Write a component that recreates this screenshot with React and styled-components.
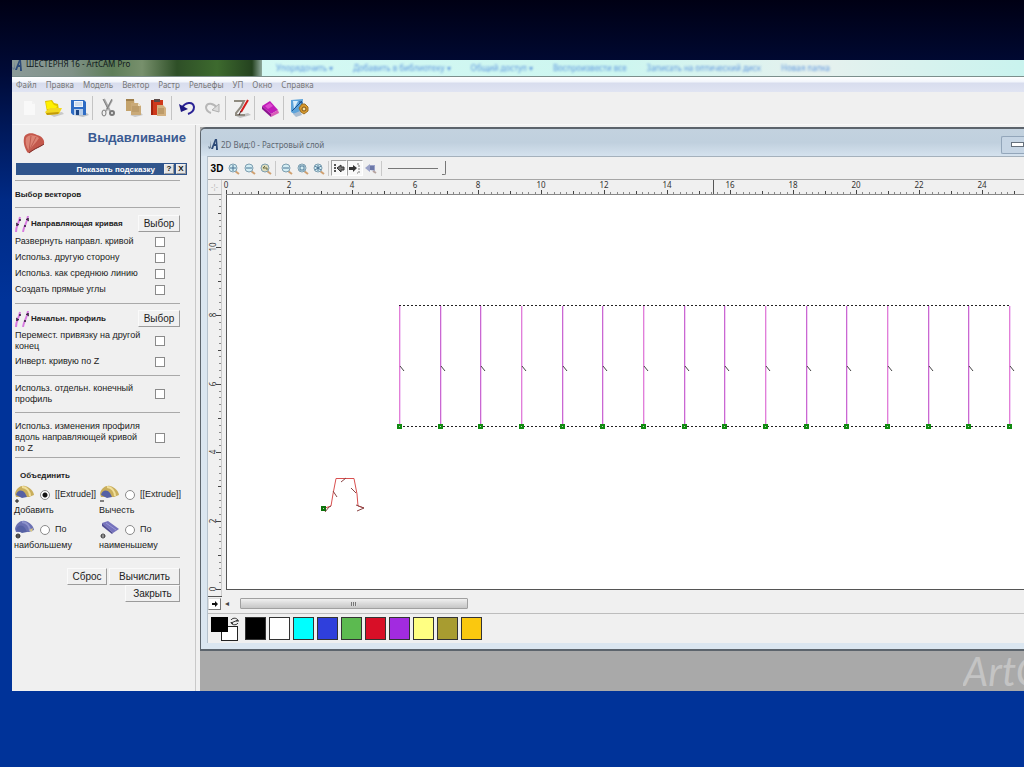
import React, { useEffect, useRef, useState } from "react";
import styled, { createGlobalStyle } from "styled-components";

const MENU = ["Файл", "Правка", "Модель", "Вектор", "Растр", "Рельефы", "УП", "Окно", "Справка"];

const BACK_LINKS = [
    "Упорядочить ▾",
    "Добавить в библиотеку ▾",
    "Общий доступ ▾",
    "Воспроизвести все",
    "Записать на оптический диск",
    "Новая папка",
];

const COLORS = [
    ["Черный", "#000000"],
    ["Белый", "#ffffff"],
    ["Голубой", "#00ffff"],
    ["Синий", "#2f3fdc"],
    ["Зеленый", "#5cba50"],
    ["Красный", "#d80f27"],
    ["Фиолетовый", "#a22be0"],
    ["Желтый", "#ffff82"],
    ["Оливковый", "#a89c30"],
    ["Оранжевый", "#fac80f"],
];

// ruler scale, pixels per unit
const STEP_X = 31.5;
const STEP_Y = 34.2;

/* ---------- icons ---------- */

const LogoIcon = () => (
    <svg width="10" height="11" viewBox="0 0 10 11">
        <path d="M0 7 L2 8 L3 1 L3 9 L1 10 Z" fill="#6d7f92" />
        <path d="M3 10 L7 0 L9 0 L10 11 L8 11 L8 7 L6 7 L5 10 Z M7 5 L8 5 L8 2 Z" fill="#2c4a78" />
    </svg>
);

const NewIcon = () => (
    <svg width="20" height="20" viewBox="0 0 20 20">
        <path d="M5 3 H13 L16 6 V17 H5 Z" fill="#f9f9f9" />
        <path d="M13 3 V6 H16" fill="#f2f2f2" />
    </svg>
);

const OpenIcon = () => (
    <svg width="20" height="20" viewBox="0 0 20 20">
        <path d="M5 16 L18 14 L20 16 L10 19 Z" fill="#c9c9c9" />
        <path d="M1 3 L8 2 L10 5 L14 6 L15 12 L3 14 Z" fill="#e0c400" />
        <path d="M2 4 L7 3 L10 7 L13 8 L12 11 L3 11 Z" fill="#fff100" />
        <path d="M1 14 L6 10 L18 10 L15 16 L3 17 Z" fill="#f2d820" />
        <path d="M2 15 L15 14 L14 16 L3 17 Z" fill="#c29a08" />
    </svg>
);

const SaveIcon = () => (
    <svg width="20" height="20" viewBox="0 0 20 20">
        <path d="M5 17 L18 15 L20 17 L14 19 Z" fill="#b9bfc6" />
        <path d="M2 2 H15 L17 4 V17 H4 L2 15 Z" fill="#2e6cc4" />
        <path d="M5 3 H14 V9 H5 Z" fill="#eef4fb" />
        <path d="M6 5 H13 M6 7 H13" stroke="#b3c7de" />
        <path d="M5 11 H14 V17 H5 Z" fill="#b6cdea" />
        <path d="M7 12 H10 V17 H7 Z" fill="#1b4585" />
    </svg>
);

const CutIcon = () => (
    <svg width="20" height="20" viewBox="0 0 20 20" fill="none">
        <path d="M6 1 L12 13 M14 2 L8 13" stroke="#a8a8a8" strokeWidth="2" />
        <path d="M5 1 L10 11 M14 1 L9 11" stroke="#7c7c7c" />
        <ellipse cx="6" cy="15" rx="2" ry="3" stroke="#7a7a7a" />
        <ellipse cx="14" cy="15" rx="2" ry="2" stroke="#7a7a7a" strokeWidth="2" />
    </svg>
);

const CopyIcon = () => (
    <svg width="20" height="20" viewBox="0 0 20 20">
        <path d="M7 17 L18 15 L20 17 L12 19 Z" fill="#c9c9c9" />
        <path d="M3 1 H11 L12 13 H3 Z" fill="#c4a36c" />
        <path d="M3 1 H11 V3 H3 Z" fill="#9f7f4c" />
        <path d="M8 5 H15 L18 8 V17 H8 Z" fill="#caaa78" />
        <path d="M15 5 V8 H18 Z" fill="#f1e3c6" />
        <path d="M9 9 H16 M9 11 H16 M9 13 H16" stroke="#b08f5c" />
    </svg>
);

const PasteIcon = () => (
    <svg width="20" height="20" viewBox="0 0 20 20">
        <path d="M3 2 H15 V17 H3 Z" fill="#cf3a1c" />
        <path d="M3 2 H5 V17 H3 Z" fill="#a02410" />
        <path d="M6 1 H12 V4 H6 Z" fill="#5b4a48" />
        <path d="M9 7 H15 L18 10 V18 H9 Z" fill="#d3b180" />
        <path d="M10 11 H16 M10 13 H16 M10 15 H16" stroke="#a78552" />
    </svg>
);

const UndoIcon = () => (
    <svg width="20" height="20" viewBox="0 0 20 20" fill="none">
        <path d="M5 10 C8 4 16 3 17 9 C17 13 14 15 11 16" stroke="#2b2396" strokeWidth="2" />
        <path d="M2 6 L4 14 L11 11 Z" fill="#1d1780" />
    </svg>
);

const RedoIcon = () => (
    <svg width="20" height="20" viewBox="0 0 20 20" fill="none">
        <path d="M15 10 C12 5 5 4 4 9 C4 12 6 14 9 15" stroke="#b7b7b7" strokeWidth="2" />
        <path d="M17 6 L17 14 L10 12 Z" fill="#dcdcdc" stroke="#b0b0b0" />
    </svg>
);

const EditIcon = () => (
    <svg width="20" height="20" viewBox="0 0 20 20" fill="none">
        <path d="M5 18 L17 15 L20 17 L9 20 Z" fill="#c0c0c0" />
        <path d="M3 3 H13 L10 9 L5 15 L5 17 H14" stroke="#8f8b80" strokeWidth="2" />
        <path d="M17 2 L10 14" stroke="#d51c1c" strokeWidth="2" />
        <path d="M10 13 L8 17" stroke="#402020" />
    </svg>
);

const EraserIcon = () => (
    <svg width="20" height="20" viewBox="0 0 20 20">
        <path d="M2 8 L10 3 L18 12 L11 16 Z" fill="#c11bb9" />
        <path d="M2 8 L11 16 L11 19 L2 11 Z" fill="#8d1390" />
        <path d="M11 16 L18 12 L19 15 L11 19 Z" fill="#d85cb8" />
        <path d="M5 8 L10 5 L13 8 L8 11 Z" fill="#dc4ccf" />
    </svg>
);

const HelpIcon = () => (
    <svg width="20" height="20" viewBox="0 0 20 20" fill="none">
        <path d="M2 2 L14 1 L13 14 L5 16 L2 14 Z" fill="#5da3da" />
        <path d="M4 3 L9 3 L5 11 Z" fill="#d6ecfa" />
        <path d="M3 13 L13 3 M10 4 H13 V8" stroke="#18508f" />
        <path d="M4 16 L11 13 L13 17 L7 19 Z" fill="#a9bcd0" />
        <path d="M10 10 L13 6 L16 6 L19 9 L19 13 L15 16 L12 14 Z" fill="#d99a2c" stroke="#9b6f24" />
        <circle cx="15" cy="11" r="2" fill="#f7e2a0" stroke="#7b4f14" />
    </svg>
);

const ShellIcon = () => (
    <svg width="24" height="24" viewBox="0 0 24 24" fill="none">
        <path d="M2 7 C3 2 10 1 15 4 C20 5 23 9 22 13 C19 16 14 17 9 21 L6 22 C3 18 1 12 2 7 Z" fill="#c4584c" />
        <path d="M4 7 C7 3 13 4 17 7 C14 12 10 15 7 20 C4 16 3 11 4 7 Z" fill="#dc8475" />
        <path d="M7 20 L9 5 M7 20 L14 6 M7 20 L19 9" stroke="#bf5c50" />
        <path d="M22 13 C18 16 13 17 7 22" stroke="#7c2e2a" />
    </svg>
);

const CurveIcon = () => (
    <svg width="15" height="16" viewBox="0 0 15 16" fill="none">
        <path d="M1 16 C1 9 4 8 5 1 M8 16 C9 9 12 8 13 0" stroke="#d77be0" strokeWidth="2" />
        <circle cx="2" cy="9" r="1" fill="#2c1a35" />
        <circle cx="5" cy="4" r="1" fill="#2c1a35" />
        <circle cx="10" cy="10" r="1" fill="#2c1a35" />
        <circle cx="13" cy="3" r="1" fill="#2c1a35" />
        <path d="M1 7 L4 9 M11 3 L14 5" stroke="#2c1a35" />
    </svg>
);

const CombineIcon = ({ kind }) => (
    <svg width="21" height="19" viewBox="0 0 21 19" fill="none">
        {kind === "min" ? (
            <>
                <path d="M3 3 L9 1 L20 9 L14 13 Z" fill="#7673bd" />
                <path d="M3 3 L14 13 L13 14 L3 6 Z" fill="#4f4c95" />
                <path d="M7 3 L17 10" stroke="#9a98d6" />
            </>
        ) : (
            <>
                <path d="M1 9 C2 3 7 0 11 1 C16 2 20 7 20 10 L15 12 L2 12 Z" fill={kind === "max" ? "#6a70b2" : "#c9ae5c"} />
                <path d="M8 2 C13 2 16 7 16 11" stroke={kind === "max" ? "#8d92cb" : "#f1df9b"} strokeWidth="2" />
                <path d="M2 10 C3 5 8 4 11 8 L13 12 L8 13 Z" fill="#5661a4" />
                {kind === "max" && <path d="M15 10 L19 8 L18 12 Z" fill="#d8c887" />}
            </>
        )}
        {(kind === "add" || kind === "sub") && <path d="M1 16 H5" stroke="#111" />}
        {kind === "add" && <path d="M3 14 V18" stroke="#111" />}
        {(kind === "max" || kind === "min") && (
            <>
                <circle cx="4" cy="16" r="2" fill={kind === "max" ? "#777" : "none"} stroke="#333" />
                <path d="M2 16 H6" stroke="#333" />
            </>
        )}
    </svg>
);

const ZoomIcon = ({ kind }) => (
    <svg width="13" height="13" viewBox="0 0 13 13" fill="none">
        <path d="M8 9 L12 12" stroke="#d0a070" strokeWidth="2" />
        <circle cx="6" cy="6" r="4" fill={kind === "prev" ? "#dcdaba" : "#d3edf3"} stroke="#7d9eb0" strokeWidth="1" />
        {(kind === "in" || kind === "out" || kind === "wide") && <path d="M3 6 H9" stroke="#4a7494" />}
        {kind === "in" && <path d="M6 3 V9" stroke="#4a7494" />}
        {kind === "prev" && <path d="M4 6 L6 4 M4 6 H8 V8" stroke="#6b6b40" />}
        {kind === "box" && <rect x="4" y="4" width="4" height="4" stroke="#4a7494" />}
        {kind === "all" && <path d="M3 4 L9 8 M9 4 L3 8 M6 3 V9" stroke="#4a7494" />}
    </svg>
);

const SnapIcon = ({ flip }) => (
    <svg width="12" height="12" viewBox="0 0 12 12" fill="none">
        {flip ? (
            <>
                <path d="M0 5 H4 V3 L8 6 L4 10 V8 H0 Z" fill="#333" />
                <path d="M8 2 H10 V11 H8" stroke="#777" strokeDasharray="2 1" />
            </>
        ) : (
            <>
                <path d="M11 5 H8 V3 L4 6 L8 10 V8 H11 Z" fill="#777" stroke="#333" />
                <path d="M2 2 V11" stroke="#555" strokeWidth="2" strokeDasharray="2 1" />
            </>
        )}
    </svg>
);

const GhostIcon = () => (
    <svg width="12" height="12" viewBox="0 0 12 12">
        <path d="M0 6 L5 2 V3 L10 3 V9 L5 8 V10 Z" fill="#9aa2c8" />
        <path d="M8 9 L11 11" stroke="#b5a3a0" strokeWidth="2" />
        <path d="M5 4 H9 V8 H5 Z" fill="#6c78a8" />
    </svg>
);

const PageArrow = () => (
    <svg width="8" height="8" viewBox="0 0 8 8">
        <path d="M1 3 H4 V1 L7 4 L4 7 V5 H1 Z" fill="#111" />
    </svg>
);

const SwapIcon = () => (
    <svg width="9" height="9" viewBox="0 0 9 9" fill="none">
        <path d="M1 3 C3 0 8 1 8 4 M8 6 C6 9 1 8 1 5 M1 6 L8 3" stroke="#333" />
        <path d="M6 4 H9 M1 5 L3 7" stroke="#333" />
    </svg>
);

/* ---------- rulers and drawing ---------- */

const TopRuler = () => {
    const box = useRef(null);
    const [width, setWidth] = useState(0);

    useEffect(() => {
        const measure = () => setWidth(box.current.clientWidth);
        measure();
        window.addEventListener("resize", measure);
        return () => window.removeEventListener("resize", measure);
    }, []);

    // only as many ticks as the ruler has room for
    const count = Math.floor((width * 5) / STEP_X);
    const ticks = Array.from({ length: count }, (_, i) => i);

    return (
        <RulerX ref={box}>
            <RulerSvg>
                {ticks.map((i) => {
                    const len = i % 10 === 0 ? 4 : i % 5 === 0 ? 3 : 2;
                    return (
                        <rect
                            key={i}
                            x={Math.round((i * STEP_X) / 5)}
                            y={14 - len}
                            width="1"
                            height={len}
                            fill={i % 5 ? "#888" : "#444"}
                        />
                    );
                })}
                {ticks.filter((i) => i % 10 === 0).map((i) => (
                    <text key={i} x={Math.round((i * STEP_X) / 5)} y="8" textAnchor="middle">
                        {i / 5}
                    </text>
                ))}
                <rect x="487" y="0" width="1" height="14" fill="#555" />
            </RulerSvg>
        </RulerX>
    );
};

const SideRuler = () => {
    const zero = 394;
    const ticks = Array.from({ length: 58 }, (_, i) => i);
    return (
        <RulerY>
            <RulerSvg>
                {ticks.map((i) => {
                    const y = Math.round(zero - (i * STEP_Y) / 5);
                    const len = i % 10 === 0 ? 5 : i % 5 === 0 ? 3 : 2;
                    return <rect key={i} x={13 - len} y={y} width={len} height="1" fill={i % 5 ? "#888" : "#444"} />;
                })}
                {ticks.filter((i) => i % 10 === 0).map((i) => {
                    const y = Math.round(zero - (i * STEP_Y) / 5);
                    return (
                        <text key={i} x="8" y={y} transform={`rotate(-90 8 ${y})`} textAnchor="middle">
                            {i / 5}
                        </text>
                    );
                })}
                <rect x="13" y="0" width="1" height="401" fill="#ccc" />
                <rect x="0" y="401" width="14" height="1" fill="#555" />
            </RulerSvg>
        </RulerY>
    );
};

const Drawing = () => {
    const columns = Array.from({ length: 16 }, (_, i) => Math.round(172 + i * 40.67));
    return (
        <CanvasSvg>
            <path d="M172 110.5 H783 M172 231.5 H783" stroke="#222" strokeDasharray="2 2" />
            {columns.map((x, i) => (
                <g key={x}>
                    <rect x={x} y="111" width="1" height="120" fill={i % 3 ? "#c968d2" : "#e27fd8"} />
                    <rect x={x + 1} y="111" width="1" height="120" fill="#f3d0f5" />
                    <path d={`M${x + 1} 171 L${x + 5} 176`} stroke="#444" fill="none" />
                    <rect x={x - 2} y="229" width="5" height="5" fill="#108a10" />
                    <rect x={x} y="231" width="1" height="1" fill="#b6e0b6" />
                </g>
            ))}
            <path d="M98 313 L104 311 L106 299 L109 283.5 H127 L130 299 L131 311 L137 313" stroke="#d95050" fill="none" />
            <path
                d="M106 296 L110 302 M114 287 L119 283 M124 293 L129 298 M98 317 L102 312 L104 311 M129 310 L137 313 L130 316"
                stroke="#8a4545"
                fill="none"
            />
            <rect x="94" y="311" width="5" height="5" fill="#0d720d" />
            <rect x="96" y="313" width="1" height="1" fill="#b6e0b6" />
        </CanvasSvg>
    );
};

/* ---------- panel parts ---------- */

const CheckRow = ({ id, children }) => (
    <Row>
        <RowLabel htmlFor={id}>{children}</RowLabel>
        <Check id={id} type="checkbox" />
    </Row>
);

const VectorRow = ({ title }) => (
    <PickRow>
        <CurveIcon />
        <PickTitle>{title}</PickTitle>
        <PanelButton $width="42px">Выбор</PanelButton>
    </PickRow>
);

const CombineOption = ({ kind, text, below, value, onChange }) => (
    <Option>
        <OptionTop>
            <CombineIcon kind={kind} />
            <Radio type="radio" name="combine" checked={value === kind} onChange={() => onChange(kind)} />
            <span>{text}</span>
        </OptionTop>
        <OptionBelow>{below}</OptionBelow>
    </Option>
);

const ExtrudePanel = () => {
    const [combine, setCombine] = useState("add");

    return (
        <Panel>
            <PanelHead>
                <ShellIcon />
                <PanelTitle>Выдавливание</PanelTitle>
            </PanelHead>
            <HintBar>
                <span>Показать подсказку</span>
                <HintButton aria-label="Справка">?</HintButton>
                <HintButton aria-label="Закрыть панель">X</HintButton>
            </HintBar>
            <Section $top="3px" $bottom="1px">
                <SectionTitle>Выбор векторов</SectionTitle>
            </Section>
            <Section $top="6px" $bottom="5px">
                <VectorRow title="Направляющая кривая" />
                <CheckRow id="reverse">Развернуть направл. кривой</CheckRow>
                <CheckRow id="side">Использ. другую сторону</CheckRow>
                <CheckRow id="middle">Использ. как среднюю линию</CheckRow>
                <CheckRow id="corners">Создать прямые углы</CheckRow>
            </Section>
            <Section $top="5px" $bottom="5px">
                <VectorRow title="Начальн. профиль" />
                <CheckRow id="anchor">{"Перемест. привязку на другой\nконец"}</CheckRow>
                <CheckRow id="invert">Инверт. кривую по Z</CheckRow>
            </Section>
            <Section $top="6px" $bottom="5px">
                <CheckRow id="endprofile">{"Использ. отдельн. конечный\nпрофиль"}</CheckRow>
            </Section>
            <Section $top="7px" $bottom="1px">
                <CheckRow id="scale">{"Использ. изменения профиля\nвдоль направляющей кривой\nпо Z"}</CheckRow>
            </Section>
            <Section $top="12px" $bottom="2px">
                <CombineTitle>Объединить</CombineTitle>
                <Options>
                    <CombineOption kind="add" text="[[Extrude]]" below="Добавить" value={combine} onChange={setCombine} />
                    <CombineOption kind="sub" text="[[Extrude]]" below="Вычесть" value={combine} onChange={setCombine} />
                    <CombineOption kind="max" text="По" below="наибольшему" value={combine} onChange={setCombine} />
                    <CombineOption kind="min" text="По" below="наименьшему" value={combine} onChange={setCombine} />
                </Options>
            </Section>
            <Actions>
                <PanelButton $width="40px">Сброс</PanelButton>
                <PanelButton $width="71px">Вычислить</PanelButton>
                <PanelButton $width="55px">Закрыть</PanelButton>
            </Actions>
        </Panel>
    );
};

const ViewWindow = () => (
    <ViewFrame>
        <ViewTitle>
            <LogoIcon />
            <span>2D Вид:0 - Растровый слой</span>
            <MinButton aria-label="Свернуть">
                <MinGlyph />
            </MinButton>
        </ViewTitle>
        <ViewBody>
            <ViewTools>
                <ToolCell $bold>3D</ToolCell>
                <ToolCell aria-label="Увеличить"><ZoomIcon kind="in" /></ToolCell>
                <ToolCell aria-label="Уменьшить"><ZoomIcon kind="out" /></ToolCell>
                <ToolCell aria-label="Предыдущий масштаб"><ZoomIcon kind="prev" /></ToolCell>
                <ToolSep />
                <ToolCell aria-label="По ширине"><ZoomIcon kind="wide" /></ToolCell>
                <ToolCell aria-label="По выделению"><ZoomIcon kind="box" /></ToolCell>
                <ToolCell aria-label="Показать все"><ZoomIcon kind="all" /></ToolCell>
                <ToolSep />
                <ToolCell $pressed aria-label="Привязка слева"><SnapIcon /></ToolCell>
                <ToolCell $pressed aria-label="Привязка справа"><SnapIcon flip /></ToolCell>
                <ToolCell aria-label="Просмотр"><GhostIcon /></ToolCell>
                <ToolSep />
                <Opacity type="range" defaultValue="100" aria-label="Контраст" />
            </ViewTools>
            <Sheet>
                <Corner>-¦-</Corner>
                <TopRuler />
                <SideRuler />
                <CanvasBox><Drawing /></CanvasBox>
            </Sheet>
            <ScrollRow>
                <SmallButton aria-label="Страницы"><PageArrow /></SmallButton>
                <ScrollArrow aria-label="Влево">◂</ScrollArrow>
                <ScrollThumb>
                    <Grip />
                </ScrollThumb>
            </ScrollRow>
            <Palette>
                <Current>
                    <BackColor />
                    <FrontColor />
                    <SwapButton aria-label="Поменять цвета"><SwapIcon /></SwapButton>
                </Current>
                {COLORS.map(([name, color]) => (
                    <Swatch key={name} aria-label={name} $color={color} />
                ))}
            </Palette>
        </ViewBody>
    </ViewFrame>
);

const App = () => (
    <Backdrop>
        <GlobalStyle />
        <MainWindow>
            <TitleBar>
                <TitleText>
                    <LogoIcon />
                    ШЕСТЕРНЯ 16 - ArtCAM Pro
                </TitleText>
                <GlassLinks>
                    {BACK_LINKS.map((link) => (
                        <span key={link}>{link}</span>
                    ))}
                </GlassLinks>
            </TitleBar>
            <MenuBar>
                {MENU.map((item) => (
                    <MenuItem key={item}>{item}</MenuItem>
                ))}
            </MenuBar>
            <Toolbar>
                <IconButton aria-label="Создать"><NewIcon /></IconButton>
                <IconButton aria-label="Открыть"><OpenIcon /></IconButton>
                <IconButton aria-label="Сохранить"><SaveIcon /></IconButton>
                <Separator />
                <IconButton aria-label="Вырезать"><CutIcon /></IconButton>
                <IconButton aria-label="Копировать"><CopyIcon /></IconButton>
                <IconButton aria-label="Вставить"><PasteIcon /></IconButton>
                <Separator />
                <IconButton aria-label="Отменить"><UndoIcon /></IconButton>
                <IconButton aria-label="Повторить"><RedoIcon /></IconButton>
                <Separator />
                <IconButton aria-label="Заметки"><EditIcon /></IconButton>
                <Separator />
                <IconButton aria-label="Руководство"><EraserIcon /></IconButton>
                <Separator />
                <IconButton aria-label="Параметры"><HelpIcon /></IconButton>
            </Toolbar>
            <Content>
                <ExtrudePanel />
                <Workspace>
                    <ViewWindow />
                    <Watermark>
                        <WatermarkText>ArtC</WatermarkText>
                    </Watermark>
                </Workspace>
            </Content>
        </MainWindow>
    </Backdrop>
);

export default App;

const GlobalStyle = createGlobalStyle`
    * {
        box-sizing: border-box;
    }

    body {
        margin: 0;
        overflow: hidden;
        font-family: "Liberation Sans", Arial, sans-serif;
        color: #222;
    }

    button {
        padding: 0;
        font-family: inherit;
        color: inherit;
    }

    svg {
        display: block;
        flex: none;
    }
`;

const Backdrop = styled.div`
    min-height: 100vh;
    display: flex;
    flex-direction: column;
    padding: 60px 0 76px 12px;
    background: linear-gradient(180deg, #000014 0, #000a36 70px, #002a85 200px, #003399 300px);
`;

const MainWindow = styled.div`
    flex: 1;
    display: flex;
    flex-direction: column;
    background: #f0f0f0;
`;

const TitleBar = styled.header`
    display: flex;
    height: 17px;
    overflow: hidden;
    border-bottom: 1px solid #7c8f8c;
    background: linear-gradient(90deg, #d9fbf6, #cdf6f0 60%, #e6f1ee 80%, #c9f3ee);
`;

const TitleText = styled.div`
    flex: none;
    width: 250px;
    display: flex;
    gap: 4px;
    font-family: "Noto Sans", sans-serif;
    font-size: 8px;
    line-height: 8px;
    color: #10181c;
    background: linear-gradient(90deg, #8b9a98 0, #7f9186 60px, #5e7d58 100px, #77906c 130px, #2e4f27 165px, #3d6a2e 205px, #24421f 240px, #8fa99c 250px);
`;

const GlassLinks = styled.div`
    display: flex;
    gap: 20px;
    padding-left: 14px;
    font-family: "Noto Sans", sans-serif;
    font-size: 8px;
    line-height: 16px;
    white-space: nowrap;
    color: #5f97de;
    filter: blur(1px);
`;

const MenuBar = styled.nav`
    display: flex;
    gap: 9px;
    height: 15px;
    padding: 1px 4px 0;
    background: linear-gradient(180deg, #ffffff 0, #f2f5fb 5px, #d8ddee 6px, #e0e4f2 100%);
`;

const MenuItem = styled.button`
    border: 0;
    background: none;
    font-family: "Noto Sans", sans-serif;
    font-size: 8px;
    line-height: 12px;
    color: #777;
`;

const Toolbar = styled.div`
    display: flex;
    align-items: center;
    height: 33px;
    padding: 0 0 1px 4px;
    border-bottom: 1px solid #f8f8f8;
`;

const IconButton = styled.button`
    width: 25px;
    height: 24px;
    display: flex;
    align-items: center;
    justify-content: center;
    border: 0;
    background: none;
`;

const Separator = styled.span`
    width: 1px;
    height: 24px;
    margin: 0 2px 0 1px;
    background: #c4c4c4;
`;

const Content = styled.div`
    flex: 1;
    display: flex;
`;

const Panel = styled.aside`
    flex: none;
    width: 184px;
    padding: 0 15px 0 3px;
    border-right: 1px solid #c9c9c9;
`;

const PanelHead = styled.div`
    display: flex;
    justify-content: space-between;
    height: 38px;
    padding: 6px 0 0 7px;
    margin-right: -6px;
`;

const PanelTitle = styled.h1`
    margin: 0;
    font-size: 13px;
    line-height: 14px;
    color: #3a5a92;
`;

const HintBar = styled.div`
    display: flex;
    align-items: center;
    justify-content: flex-end;
    gap: 2px;
    height: 12px;
    margin: 0 -7px 5px 1px;
    padding-right: 1px;
    background: #30558c;
    color: #fff;
    font-size: 8px;
    font-weight: bold;

    span {
        margin-right: 7px;
    }
`;

const HintButton = styled.button`
    width: 10px;
    height: 10px;
    border: 1px outset #eee;
    background: #e4e4e4;
    color: #111;
    font-size: 8px;
    font-weight: bold;
    line-height: 8px;
`;

const Section = styled.section`
    padding: ${(props) => props.$top} 0 ${(props) => props.$bottom};
    border-top: 1px solid #a9a9a9;
`;

const SectionTitle = styled.h2`
    margin: 0;
    font-size: 8px;
    line-height: 22px;
`;

const PickRow = styled.div`
    display: flex;
    align-items: center;
    gap: 1px;
    height: 20px;
    padding-bottom: 1px;
`;

const PickTitle = styled.h2`
    flex: 1;
    margin: 0;
    white-space: nowrap;
    font-size: 8px;
    line-height: 11px;
`;

const Row = styled.div`
    display: flex;
    align-items: center;
    justify-content: space-between;
    min-height: 16px;
    padding: 1px 15px 2px 0;
`;

const RowLabel = styled.label`
    white-space: pre;
    font-size: 9px;
    line-height: 11px;
`;

const Check = styled.input`
    appearance: none;
    flex: none;
    width: 10px;
    height: 10px;
    margin: 0;
    border: 1px solid #8a8a8a;
    background: #fff;

    &:checked {
        background: #555;
    }
`;

const PanelButton = styled.button`
    width: ${(props) => props.$width};
    height: 17px;
    border: 1px solid;
    border-color: #fafafa #9b9b9b #9b9b9b #fafafa;
    background: #f0f0f0;
    font-size: 10px;
    line-height: 14px;
`;

const CombineTitle = styled.h2`
    margin: 0 0 3px 5px;
    font-size: 8px;
    line-height: 12px;
`;

const Options = styled.div`
    display: grid;
    grid-template-columns: 85px 85px;
    margin-left: -1px;
`;

const Option = styled.label`
    height: 35px;
    font-size: 9px;
    line-height: 11px;
`;

const OptionTop = styled.span`
    display: flex;
    align-items: center;
    gap: 5px;
    height: 19px;
`;

const OptionBelow = styled.span`
    display: block;
    line-height: 13px;
`;

const Radio = styled.input`
    appearance: none;
    flex: none;
    width: 10px;
    height: 10px;
    margin: 0;
    border: 1px solid #8a8a8a;
    border-radius: 50%;
    background: #fff;

    &:checked {
        background: radial-gradient(circle, #111 0 2px, #fff 3px);
    }
`;

const Actions = styled.div`
    display: flex;
    flex-wrap: wrap;
    justify-content: flex-end;
    column-gap: 2px;
    padding-top: 10px;
    border-top: 1px solid #a9a9a9;
`;

const Workspace = styled.main`
    flex: 1;
    min-width: 0;
    display: flex;
    flex-direction: column;
    margin: 2px 0 0 4px;
    background: #a9a9a9;
`;

const ViewFrame = styled.section`
    flex: 1;
    min-height: 0;
    display: flex;
    flex-direction: column;
    padding: 0 0 6px 6px;
    border: 1px solid #5c646c;
    border-width: 2px 0 2px 1px;
    border-radius: 6px 0 0 0;
    background: #dbe6f0;
`;

const ViewTitle = styled.header`
    display: flex;
    align-items: center;
    gap: 3px;
    height: 27px;
    margin-left: -6px;
    padding-left: 7px;
    padding-top: 4px;
    border-radius: 4px 0 0 0;
    background: linear-gradient(180deg, #c3d2df, #c0d0de 50%, #d5e2ee);
    font-family: "Noto Sans", sans-serif;
    font-size: 8px;
    color: #5e6872;
`;

const MinButton = styled.button`
    width: 23px;
    height: 18px;
    margin-left: auto;
    display: flex;
    align-items: center;
    justify-content: flex-end;
    border: 1px solid #93a6ba;
    border-right: 0;
    border-radius: 2px 0 0 2px;
    background: #c6d5e4;
`;

const MinGlyph = styled.span`
    width: 13px;
    height: 5px;
    border: 1px solid #65707c;
    background: #fff;
`;

const ViewBody = styled.div`
    flex: 1;
    min-height: 0;
    display: flex;
    flex-direction: column;
    border-top: 1px solid #a5b1bc;
    border-left: 1px solid #b6c2cd;
    background: #f0f0f0;
`;

const ViewTools = styled.div`
    display: flex;
    align-items: center;
    height: 23px;
    padding-left: 1px;
    border-bottom: 1px solid #a6a6a6;
`;

const ToolCell = styled.button`
    width: 16px;
    height: 16px;
    display: flex;
    align-items: center;
    justify-content: center;
    border: 1px solid transparent;
    border-color: ${(props) => (props.$pressed ? "#a0a0a0 #fff #fff #a0a0a0" : "transparent")};
    background: ${(props) => (props.$pressed ? "#f8f8f8" : "none")};
    font-size: 10px;
    font-weight: ${(props) => (props.$bold ? "bold" : "normal")};
    color: #000;
`;

const ToolSep = styled.span`
    width: 1px;
    height: 15px;
    margin: 0 2px;
    background: #c9c9c9;
`;

const Opacity = styled.input`
    appearance: none;
    width: 58px;
    height: 14px;
    margin: 0 0 0 4px;
    background: linear-gradient(#777, #777) no-repeat 0 50% / 50px 1px;

    &::-webkit-slider-thumb {
        appearance: none;
        width: 4px;
        height: 14px;
        border: 1px solid #777;
        border-width: 0 1px 1px 0;
        border-radius: 0 0 2px 0;
        background: #f0f0f0;
    }
`;

const Sheet = styled.div`
    flex: 1;
    min-height: 0;
    display: grid;
    grid-template-columns: 18px 1fr;
    grid-template-rows: 15px 1fr;
`;

const Corner = styled.div`
    border-right: 1px solid #ccc;
    border-bottom: 1px solid #999;
    margin-right: 4px;
    text-align: center;
    font-size: 8px;
    line-height: 14px;
    color: #b5b5b5;
`;

const RulerX = styled.div`
    min-width: 0;
    border-bottom: 1px solid #888;
`;

const RulerY = styled.div`
    min-height: 0;
`;

const RulerSvg = styled.svg`
    width: 100%;
    height: 100%;
    overflow: visible;
    font-family: "Noto Sans", sans-serif;
    font-size: 8px;
    fill: #333;
`;

const CanvasBox = styled.div`
    min-width: 0;
    min-height: 0;
    border-left: 1px solid #555;
    border-bottom: 1px solid #555;
    background: #fff;
`;

const CanvasSvg = styled.svg`
    width: 100%;
    height: 100%;
`;

const ScrollRow = styled.div`
    display: flex;
    align-items: center;
    height: 24px;
    padding: 4px 0 0;
    border-bottom: 1px solid #bdbdbd;
`;

const SmallButton = styled.button`
    width: 13px;
    height: 12px;
    display: flex;
    align-items: center;
    justify-content: center;
    border: 1px solid;
    border-color: #ddd #777 #777 #ddd;
    background: #fff;
`;

const ScrollArrow = styled.button`
    width: 12px;
    height: 12px;
    margin-right: 7px;
    border: 0;
    background: none;
    font-size: 8px;
    line-height: 10px;
    color: #444;
`;

const ScrollThumb = styled.div`
    width: 28%;
    height: 11px;
    display: flex;
    align-items: center;
    justify-content: center;
    border: 1px solid #a0a0a0;
    border-radius: 1px;
    background: linear-gradient(180deg, #f0f0f0, #dadada 50%, #c6c6c6);
`;

const Grip = styled.span`
    width: 6px;
    height: 4px;
    background: repeating-linear-gradient(90deg, #777 0 1px, #ddd 1px 2px);
`;

const Palette = styled.div`
    display: flex;
    gap: 3px;
    height: 29px;
    padding: 3px 0 0 3px;
`;

const Current = styled.div`
    position: relative;
    width: 28px;
    height: 25px;
    margin-right: 3px;
`;

const FrontColor = styled.span`
    position: absolute;
    left: 0;
    top: 0;
    width: 17px;
    height: 15px;
    background: #000;
`;

const BackColor = styled.span`
    position: absolute;
    left: 10px;
    top: 9px;
    width: 17px;
    height: 15px;
    border: 1px solid #222;
    background: #fff;
`;

const SwapButton = styled.button`
    position: absolute;
    right: 0;
    top: 0;
    border: 0;
    background: none;
`;

const Swatch = styled.button`
    width: 21px;
    height: 23px;
    border: 1px solid #333;
    background: ${(props) => props.$color};
`;

const Watermark = styled.div`
    flex: none;
    width: 61px;
    height: 40px;
    margin-left: auto;
    overflow: hidden;
`;

const WatermarkText = styled.span`
    font-family: Lato, sans-serif;
    font-size: 40px;
    font-style: italic;
    line-height: 40px;
    color: #c4c4c4;
`;
